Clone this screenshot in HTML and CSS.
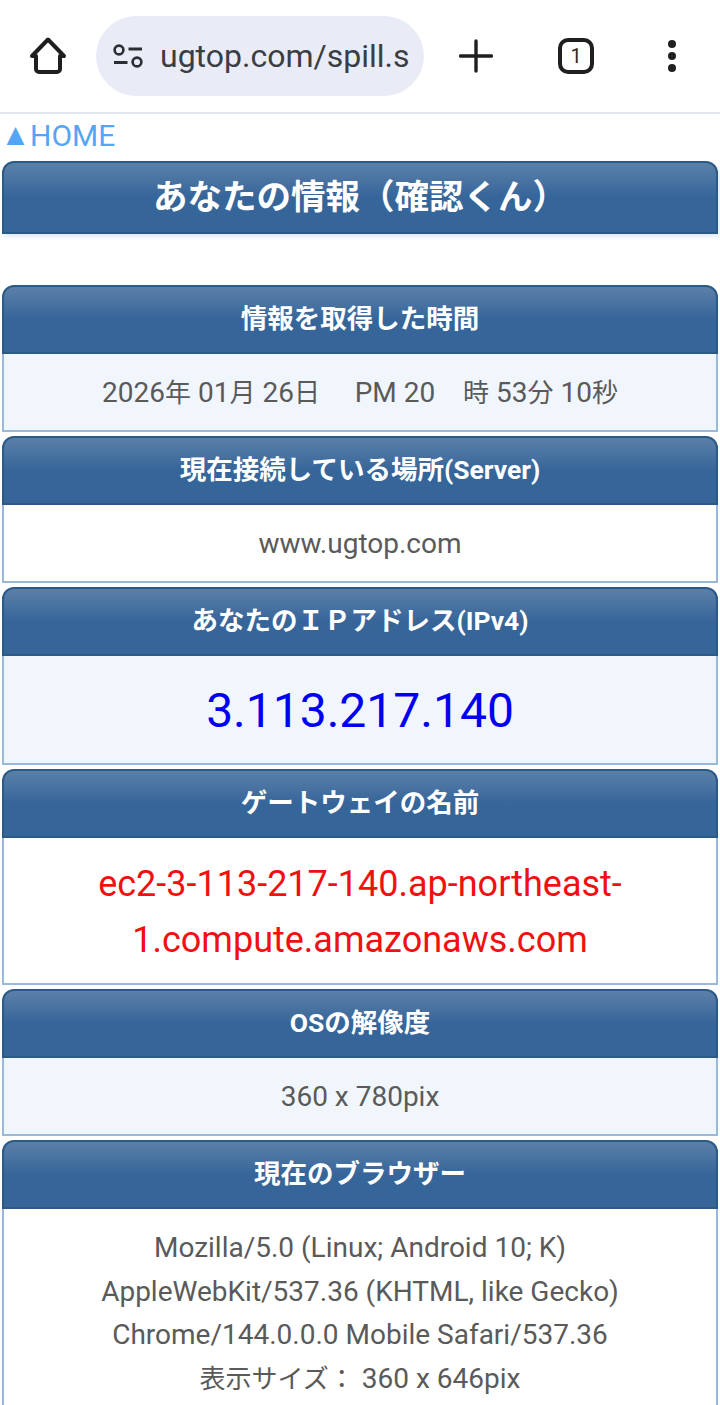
FILE: index.html
```html
<!DOCTYPE html>
<html lang="ja">
<head>
<meta charset="utf-8">
<title>あなたの情報（確認くん）</title>
<link rel="stylesheet" href="styles.css">
</head>
<body>
<header class="toolbar">
  <svg class="icon home" viewBox="0 0 40 40"><path d="M8 20H4L20 3.5 36 20H32V33A3 3 0 0 1 29 36H11A3 3 0 0 1 8 33Z" fill="none" stroke="#1f1f1f" stroke-width="4" stroke-linejoin="round"/></svg>
  <div class="omnibox">
    <svg class="tune" viewBox="0 0 32 26"><circle cx="7" cy="7" r="4.4" fill="none" stroke="#2a2d33" stroke-width="2.6"/><path d="M16.5 6H30M2 19.5H15.5" stroke="#2a2d33" stroke-width="2.8"/><circle cx="25" cy="19" r="4.4" fill="none" stroke="#2a2d33" stroke-width="2.6"/></svg>
    <span class="url">ugtop.com/spill.s</span>
  </div>
  <svg class="icon plus" viewBox="0 0 40 40"><path d="M20 5V35M4.500 20H35.500" stroke="#1f1f1f" stroke-width="3.400" stroke-linecap="round"/></svg>
  <div class="tabs">1</div>
  <svg class="icon more" viewBox="0 0 40 40"><circle cx="20" cy="8" r="4" fill="#1f1f1f"/><circle cx="20" cy="20" r="4" fill="#1f1f1f"/><circle cx="20" cy="32" r="4" fill="#1f1f1f"/></svg>
</header>
<main>
  <a class="home-link"><span class="tri">▲</span>HOME</a>
  <h1 class="title">あなたの情報（確認くん）</h1>
  <section class="card">
    <h2>情報を取得した時間</h2>
    <div class="body alt">2026<span class="ja">年</span> 01<span class="ja">月</span> 26<span class="ja">日</span> &nbsp;&nbsp;&nbsp; PM 20 &nbsp;&nbsp; <span class="ja">時</span> 53<span class="ja">分</span> 10<span class="ja">秒</span></div>
  </section>
  <section class="card">
    <h2>現在接続している場所(Server)</h2>
    <div class="body">www.ugtop.com</div>
  </section>
  <section class="card">
    <h2>あなたのＩＰアドレス(IPv4)</h2>
    <div class="body alt ip">3.113.217.140</div>
  </section>
  <section class="card">
    <h2>ゲートウェイの名前</h2>
    <div class="body host">ec2-3-113-217-140.ap-northeast-<br>1.compute.amazonaws.com</div>
  </section>
  <section class="card">
    <h2>OSの解像度</h2>
    <div class="body alt">360 x 780pix</div>
  </section>
  <section class="card">
    <h2>現在のブラウザー</h2>
    <div class="body ua">Mozilla/5.0 (Linux; Android 10; K)<br>AppleWebKit/537.36 (KHTML, like Gecko)<br>Chrome/144.0.0.0 Mobile Safari/537.36<br><span class="ja">表示サイズ：</span> 360 x 646pix</div>
  </section>
</main>
</body>
</html>
```
FILE: styles.css
```css
* { box-sizing: border-box; }
html, body { margin: 0; padding: 0; height: 1405px; overflow: hidden; background: #fff; }
body { font-family: Roboto, "Noto Sans CJK JP", sans-serif; color: #5a5a5a; }

.toolbar { height: 114px; display: flex; align-items: center; border-bottom: 2px solid #e2e6f0; padding: 0 28px; }
.icon { flex: none; width: 40px; height: 40px; }
.home { margin-right: 28px; }
.omnibox { flex: none; width: 328px; height: 80px; border-radius: 40px; background: #e9ecf6; display: flex; align-items: center; padding-left: 16px; overflow: hidden; }
.tune { flex: none; width: 32px; height: 26px; margin-right: 16px; }
.url { font-size: 32px; color: #3a3d44; white-space: nowrap; }
.plus { margin-left: 32px; width: 40px; }
.tabs { flex: none; margin-left: 62px; width: 36px; height: 36px; border: 4px solid #1f1f1f; border-radius: 10px; font-size: 20px; color: #2a2a2a; display: flex; align-items: center; justify-content: center; }
.more { margin-left: 58px; }

main { padding: 0 2px; }
.home-link { display: block; height: 47px; margin: 0 -2px; padding: 5px 0 0 6px; font-size: 30px; line-height: 34px; color: #55a5f5; }
.tri { display: inline-block; width: 24px; font-size: 22px; vertical-align: 1px; transform: scaleX(.86); transform-origin: left center; }

.title, .card h2 { margin: 0; text-align: center; color: #fff; font-weight: 700; background: linear-gradient(#5b80a8 0%, #36659a 50%, #36659a 100%); border: 2px solid #2c5a86; border-radius: 12px 12px 0 0; }
.title { height: 73px; font-size: 34.5px; line-height: 69px; box-shadow: 2px 3px 4px #e4e9f1; margin-bottom: 51px; }
.card { margin-bottom: 4px; }
.card h2 { height: 69px; font-size: 26.5px; line-height: 64px; }
.body { border: 2px solid #98b9da; border-top: 0; text-align: center; font-size: 28px; line-height: 43.5px; height: 78px; padding: 17px 4px 0; background: #fff; }
.ja { font-size: 26px; }
.alt { background: #f1f6fd; }
.ip { font-size: 48px; line-height: 56px; height: 109px; padding: 27px 4px 0; color: #0000f0; }
.host { font-size: 36px; line-height: 56px; height: 147px; padding: 18px 4px 0; color: #f01010; }
.ua { height: auto; padding: 17px 4px; }
```
